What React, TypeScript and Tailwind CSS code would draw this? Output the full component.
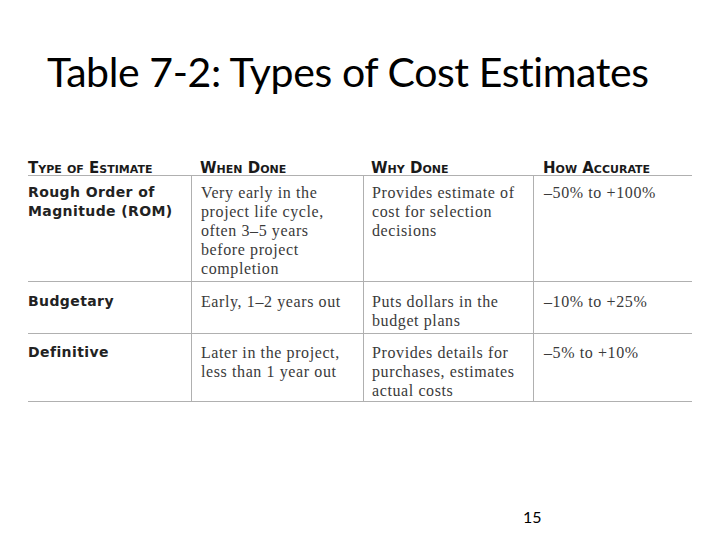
import React from 'react';

const rows = [
  {
    type: ['Rough Order of', 'Magnitude (ROM)'],
    when: ['Very early in the', 'project life cycle,', 'often 3–5 years', 'before project', 'completion'],
    why: ['Provides estimate of', 'cost for selection', 'decisions'],
    how: '–50% to +100%',
    h: 'h-[105px] pt-[7px]',
  },
  {
    type: ['Budgetary'],
    when: ['Early, 1–2 years out'],
    why: ['Puts dollars in the', 'budget plans'],
    how: '–10% to +25%',
    h: 'h-[51px] pt-[10px]',
  },
  {
    type: ['Definitive'],
    when: ['Later in the project,', 'less than 1 year out'],
    why: ['Provides details for', 'purchases, estimates', 'actual costs'],
    how: '–5% to +10%',
    h: 'h-[67px] pt-[9px]',
  },
];

const body = "font-['Liberation_Serif',serif] text-[16px] leading-[19px] text-[#3a3a3a] tracking-[0.6px]";

function Lines({ lines }: { lines: string[] }) {
  return (
    <>
      {lines.map((l, i) => (
        <div key={i} className="whitespace-nowrap">{l}</div>
      ))}
    </>
  );
}

export default function App() {
  return (
    <div className="w-[720px] h-[540px] bg-white relative overflow-hidden">
      <h1 className="pl-[47px] pt-[46px] font-['Lato',sans-serif] text-[41px] leading-[52px] text-black tracking-[-0.4px]">
        Table 7-2: Types of Cost Estimates
      </h1>

      <div className="ml-[28px] mt-[63px] w-[664px]">
        <div className="flex border-b border-[#b0b0b0] font-['DejaVu_Sans',sans-serif] font-bold text-[15px] leading-[14px] text-[#1a1a1a] [font-variant:small-caps]">
          <div className="w-[163px]">Type of Estimate</div>
          <div className="w-[172px] pl-[9px]">When Done</div>
          <div className="w-[170px] pl-[8px]">Why Done</div>
          <div className="w-[159px] pl-[10px]">How Accurate</div>
        </div>
        {rows.map((r, i) => (
          <div key={i} className={`flex border-b border-[#b0b0b0] ${body}`}>
            <div className={`w-[163px] ${r.h} font-['DejaVu_Sans',sans-serif] font-bold text-[14px] text-[#222] tracking-[0.4px]`}>
              <Lines lines={r.type} />
            </div>
            <div className={`w-[172px] ${r.h} pl-[9px] border-l border-[#b0b0b0]`}>
              <Lines lines={r.when} />
            </div>
            <div className={`w-[170px] ${r.h} pl-[8px] border-l border-[#b0b0b0]`}>
              <Lines lines={r.why} />
            </div>
            <div className={`w-[159px] ${r.h} pl-[10px] border-l border-[#b0b0b0]`}>
              {r.how}
            </div>
          </div>
        ))}
      </div>

      <div className="absolute left-[523px] top-[505px] font-['Lato',sans-serif] text-[16px] text-black">15</div>
    </div>
  );
}
